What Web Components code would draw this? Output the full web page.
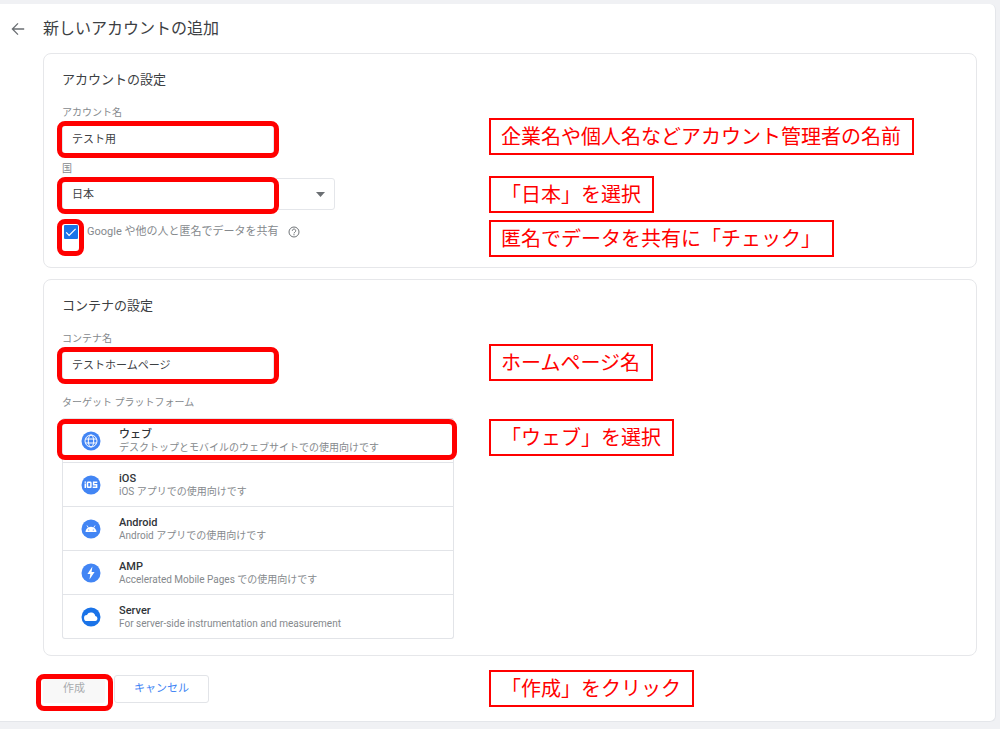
<!DOCTYPE html>
<html lang="ja">
<head>
<meta charset="utf-8">
<meta name="viewport" content="width=device-width, initial-scale=1">
<title>新しいアカウントの追加</title>
<style>
  body {
    margin: 0;
    background: #f0f1f4;
    color: #3c4043;
    font-family: Roboto, "Noto Sans CJK JP", sans-serif;
    font-size: 12px;
  }
  .first { margin-top: 48px; }
  .gap-l { margin-top: 38px; }
  .gap-m { margin-top: 21px; }
  .gap-s { margin-top: 7px; }
</style>
</head>
<body>
<account-page heading="新しいアカウントの追加">
  <settings-card heading="アカウントの設定">
    <text-field label="アカウント名" value="テスト用"></text-field>
    <select-field label="国" value="日本"></select-field>
    <check-field label="Google や他の人と匿名でデータを共有"></check-field>
    <call-out slot="notes" class="first">企業名や個人名などアカウント管理者の名前</call-out>
    <call-out slot="notes" class="gap-m">「日本」を選択</call-out>
    <call-out slot="notes" class="gap-s">匿名でデータを共有に「チェック」</call-out>
  </settings-card>
  <settings-card heading="コンテナの設定">
    <text-field label="コンテナ名" value="テストホームページ"></text-field>
    <platform-list label="ターゲット プラットフォーム">
      <platform-option marked icon="web" name="ウェブ">デスクトップとモバイルのウェブサイトでの使用向けです</platform-option>
      <platform-option icon="ios" name="iOS">iOS アプリでの使用向けです</platform-option>
      <platform-option icon="android" name="Android">Android アプリでの使用向けです</platform-option>
      <platform-option icon="amp" name="AMP">Accelerated Mobile Pages での使用向けです</platform-option>
      <platform-option icon="server" name="Server">For server-side instrumentation and measurement</platform-option>
    </platform-list>
    <call-out slot="notes" class="first">ホームページ名</call-out>
    <call-out slot="notes" class="gap-l">「ウェブ」を選択</call-out>
  </settings-card>
  <form-actions slot="actions">
    <call-out>「作成」をクリック</call-out>
  </form-actions>
</account-page>

<script>
const base = `*{box-sizing:border-box}:host{display:block}button,input,select{font:inherit;color:inherit}`;

function define(name, render) {
  customElements.define(name, class extends HTMLElement {
    constructor() {
      super();
      this.attachShadow({ mode: 'open' });
    }
    connectedCallback() {
      this.shadowRoot.innerHTML = render(this);
    }
  });
}

const attr = (el, name) => el.getAttribute(name) || '';

/* Red rounded frame laid over the thing it wraps. */
define('ring-mark', () => `<style>${base}
  :host{position:relative}
  .ring{position:absolute;pointer-events:none;z-index:1;
    top:var(--ring-top,-1px);left:var(--ring-left,-5px);
    width:var(--ring-width,222px);height:var(--ring-height,37px);
    border:5px solid #f00;border-radius:8px}
</style><slot></slot><div class="ring"></div>`);

define('call-out', () => `<style>${base}
  :host{width:fit-content;height:37px;padding:0 11px 0 10px;border:2px solid #f00;background:#fff;
    color:#f00;font:20px/31px "Noto Sans CJK JP",sans-serif;white-space:nowrap;box-sizing:border-box}
</style><slot></slot>`);

define('account-page', el => `<style>${base}
  :host{padding:4px 4px 6px 0}
  main{background:#fff;border:solid #e4e6ea;border-width:0 1px 1px 0;border-radius:0 6px 6px 0;padding:0 18px 0 43px}
  header{display:flex;align-items:center;height:49px;margin-left:-32px;gap:18px}
  button{display:flex;border:0;background:none;padding:0}
  h1{margin:0;font-size:16px;line-height:24px;font-weight:400}
  .cards{display:grid;gap:11px}
</style>
<main>
  <header>
    <button type="button" aria-label="戻る"><svg width="14" height="14" viewBox="0 0 14 14" fill="none" stroke="#6b6f73" stroke-width="1.3"><path d="M13.2 7H1.6M7 1.4 1.4 7 7 12.6"/></svg></button>
    <h1>${attr(el, 'heading')}</h1>
  </header>
  <div class="cards"><slot></slot></div>
  <slot name="actions"></slot>
</main>`);

define('settings-card', el => `<style>${base}
  section{display:grid;grid-template-columns:427px 1fr;border:1px solid #e6e7ea;border-radius:8px;padding:16px 18px 10px}
  h2{margin:0 0 16px;font-size:13px;line-height:20px;font-weight:400}
  .fields{padding-bottom:6px}
  .notes{display:flex;flex-direction:column;align-items:flex-start}
</style>
<section>
  <div class="fields"><h2>${attr(el, 'heading')}</h2><slot></slot></div>
  <div class="notes"><slot name="notes"></slot></div>
</section>`);

const fieldCss = `${base}
  :host{margin-bottom:8px}
  label{display:block;margin-bottom:2px;font-size:10px;line-height:14px;color:#85898d}`;

define('text-field', el => `<style>${fieldCss}
  input{display:block;width:212px;height:32px;padding:0 9px;border:1px solid #e4e6ea;border-radius:3px;background:#fff;font-size:11px}
</style>
<label for="f">${attr(el, 'label')}</label>
<ring-mark><input id="f" type="text" value="${attr(el, 'value')}"></ring-mark>`);

define('select-field', el => `<style>${fieldCss}
  .box{display:grid;width:273px;align-items:center}
  select,svg{grid-area:1/1}
  select{appearance:none;width:100%;height:32px;padding:0 9px;border:1px solid #e4e6ea;border-radius:3px;background:#fff;font-size:11px}
  svg{justify-self:end;margin-right:10px;pointer-events:none}
</style>
<label for="f">${attr(el, 'label')}</label>
<ring-mark><div class="box">
  <select id="f"><option>${attr(el, 'value')}</option></select>
  <svg width="9" height="5" viewBox="0 0 9 5"><path d="M0 0h9L4.5 5z" fill="#6b6f73"/></svg>
</div></ring-mark>`);

define('check-field', el => `<style>${base}
  ring-mark{display:flex;align-items:center;height:28px;margin-bottom:5px;padding-left:2px;
    --ring-top:1px;--ring-width:27px}
  .tick{display:grid;margin-right:9px}
  .tick>*{grid-area:1/1;width:14px;height:14px}
  input{appearance:none;margin:0;background:#1a73e8;border-radius:1px}
  svg{pointer-events:none}
  label{font-size:11px;line-height:16px;color:#85898d}
  button{display:flex;margin-left:10px;padding:0;border:0;background:none}
</style>
<ring-mark>
  <span class="tick"><input id="f" type="checkbox" checked><svg viewBox="0 0 14 14" fill="none" stroke="#fff" stroke-width="1.2"><path d="m2.200 7.400 2.900 3L11.600 3.800"/></svg></span>
  <label for="f">${attr(el, 'label')}</label>
  <button type="button" aria-label="ヘルプ"><svg width="12" height="12" viewBox="0 0 12 12" fill="none" stroke="#6f7377"><circle cx="6" cy="6" r="5"/><path d="M4.300 4.800a1.700 1.700 0 1 1 2.700 1.300c-.6.450-1 .7-1 1.300M6 8.100v1.200"/></svg></button>
</ring-mark>`);

define('platform-list', el => `<style>${base}
  :host{margin-top:16px}
  p{margin:0 0 8px;font-size:10px;line-height:14px;color:#85898d}
  .list{width:392px;border:solid #e2e4e8;border-width:0 1px 1px;border-radius:3px}
</style>
<p id="l">${attr(el, 'label')}</p>
<div class="list" role="group" aria-labelledby="l"><slot></slot></div>`);

const icons = {
  web: `<circle cx="10" cy="10" r="9.500" fill="#4285f4"/><g fill="none" stroke="#fff" stroke-width="1"><circle cx="10" cy="10" r="6"/><ellipse cx="10" cy="10" rx="2.700" ry="6"/><path d="M4.500 8h11M4.500 12h11"/></g>`,
  ios: `<circle cx="10" cy="10" r="9.500" fill="#4285f4"/><g fill="none" stroke="#fff" stroke-width="1.500"><path d="M4.300 8.600v4.400M4.300 6.400v1.400"/><rect x="6.500" y="7.300" width="3.400" height="5" rx=".6"/><path d="M16.300 7.300h-3.700v2.500h3v2.500h-3.900"/></g>`,
  android: `<circle cx="10" cy="10" r="9.500" fill="#4285f4"/><path d="M4.500 13a5.500 5.300 0 0 1 11 0z" fill="#fff"/><path d="m6 6.500 1.400 2.300M14 6.500l-1.400 2.300" stroke="#fff" stroke-width=".9"/><circle cx="7.700" cy="11" r=".6" fill="#4285f4"/><circle cx="12.300" cy="11" r=".6" fill="#4285f4"/>`,
  amp: `<circle cx="10" cy="10" r="9.500" fill="#4285f4"/><path d="M11.400 3.600 6.400 11h2.900l-.8 5.400L13.600 9h-3z" fill="#fff"/>`,
  server: `<circle cx="10" cy="10" r="9.500" fill="#1a73e8"/><path d="M6.200 14a3 3 0 0 1-.3-6 4.500 4.500 0 0 1 8.400 1 2.550 2.550 0 0 1 .2 5z" fill="#fff"/>`
};

define('platform-option', el => {
  const marked = el.hasAttribute('marked');
  const button = `<button type="button" aria-pressed="${marked}">
    <svg width="20" height="20" viewBox="0 0 20 20" aria-hidden="true">${icons[attr(el, 'icon')]}</svg>
    <span><b>${attr(el, 'name')}</b><small><slot></slot></small></span></button>`;
  return `<style>${base}
  :host{border-top:1px solid #e2e4e8}
  ring-mark{--ring-top:0px;--ring-left:-6px;--ring-width:400px;--ring-height:41px}
  button{display:flex;align-items:center;gap:18px;width:100%;height:43px;padding:0 18px;border:0;background:none;text-align:left}
  b,small{display:block;line-height:13px}
  b{font-size:11px;font-weight:500;color:#303438}
  small{font-size:10px;color:#85898d}
</style>${marked ? `<ring-mark>${button}</ring-mark>` : button}`;
});

define('form-actions', () => `<style>${base}
  :host{display:grid;grid-template-columns:446px 1fr;align-items:center;padding:14px 0}
  .buttons{display:flex;gap:9px}
  button{height:28px;font-size:11px;line-height:16px;border-radius:3px;padding:0 19px}
  .create{border:0;width:62px;background:#f8f8f8;color:#a8abae}
  .cancel{width:95px;padding:0;border:1px solid #e2e4e8;background:#fff;color:#4285f4}
  ring-mark{--ring-left:-7px;--ring-width:77px}
</style>
<div class="buttons">
  <ring-mark><button class="create" type="button" disabled>作成</button></ring-mark>
  <button class="cancel" type="button">キャンセル</button>
</div>
<slot></slot>`);
</script>
</body>
</html>
